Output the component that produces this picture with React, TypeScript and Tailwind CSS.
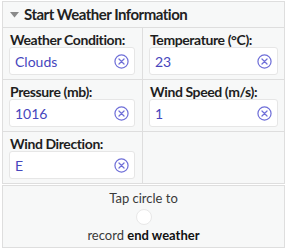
interface Field {
  label: string;
  value: string;
}

const fields: Field[] = [
  { label: 'Weather Condition:', value: 'Clouds' },
  { label: 'Temperature (°C):', value: '23' },
  { label: 'Pressure (mb):', value: '1016' },
  { label: 'Wind Speed (m/s):', value: '1' },
  { label: 'Wind Direction:', value: 'E' },
];

function ClearIcon() {
  return (
    <svg width="15" height="15" viewBox="0 0 16 16" fill="none" className="shrink-0">
      <circle cx="8" cy="8" r="7" stroke="#6f6fd8" strokeWidth="1.3" />
      <path d="M5.3 5.3 L10.7 10.7 M10.7 5.3 L5.3 10.7" stroke="#6f6fd8" strokeWidth="1.3" strokeLinecap="round" />
    </svg>
  );
}

function FieldCell({ field, right }: { field?: Field; right: boolean }) {
  return (
    <div
      className={`h-[51px] pl-[6px] pt-[4px] ${right ? 'pr-[6px]' : 'pr-[7px] border-r border-[#dedede]'}`}
    >
      {field && (
        <>
          <div className="text-[14px] leading-[16px] font-bold tracking-[-0.4px] text-[#1e1e1e] pl-px">
            {field.label}
          </div>
          <div className="mt-[-1px] h-[28px] bg-white border border-[#e6e6e6] rounded-[3px] flex items-center justify-between pl-[5px] pr-[5px]">
            <span className="text-[14px] text-[#4646bd]">{field.value}</span>
            <ClearIcon />
          </div>
        </>
      )}
    </div>
  );
}

export default function App() {
  const rows = [fields.slice(0, 2), fields.slice(2, 4), [fields[4], undefined]];

  return (
    <div
      className="w-[287px] h-[250px] bg-white px-[2px] pt-[1px]"
      style={{ fontFamily: 'Lato, "Open Sans", sans-serif' }}
    >
      <div className="border border-[#dedede] bg-[#f7f8f8]">
        {/* Header */}
        <div className="h-[26px] flex items-center pl-[7px] gap-[5px] border-b border-[#dedede]">
          <svg width="9" height="6" viewBox="0 0 9 6">
            <path d="M0 0 L9 0 L4.5 5.5 Z" fill="#8a8a8a" />
          </svg>
          <span className="text-[15px] font-bold tracking-[-0.5px] text-[#222]">
            Start Weather Information
          </span>
        </div>

        {/* Fields */}
        {rows.map((row, i) => (
          <div
            key={i}
            className={`grid grid-cols-[140px_1fr] ${i < rows.length - 1 ? 'border-b border-[#dedede]' : ''}`}
          >
            <FieldCell field={row[0]} right={false} />
            <FieldCell field={row[1]} right={true} />
          </div>
        ))}
      </div>

      {/* Record end weather */}
      <div className="mt-[1px] h-[63px] border border-[#dedede] bg-[#f7f8f8] flex flex-col items-center justify-center text-[13px] text-[#3a3a3a]">
        <div className="leading-[17px]">Tap circle to</div>
        <div className="my-[2px] w-[16px] h-[16px] rounded-full bg-white border border-[#e8e8e8]" />
        <div className="leading-[17px]">
          record <span className="font-bold text-[#111]">end weather</span>
        </div>
      </div>
    </div>
  );
}
